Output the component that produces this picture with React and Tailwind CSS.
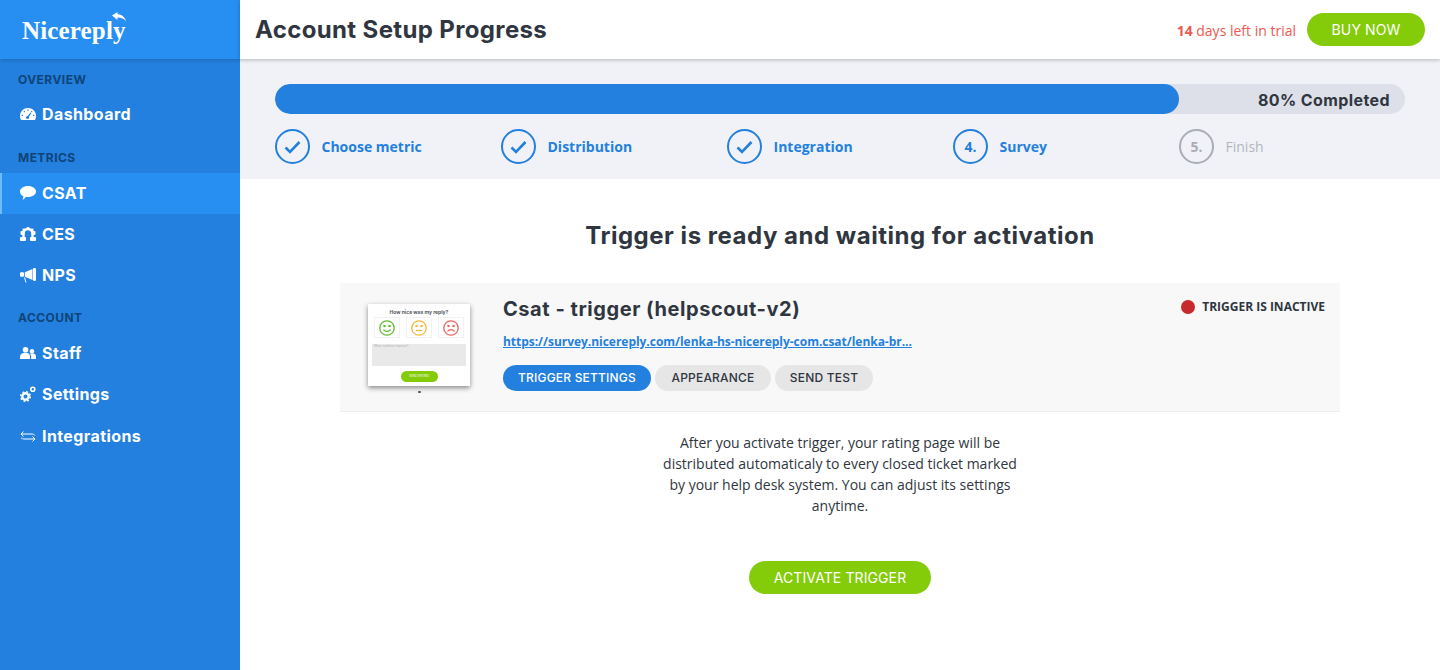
import React from "react";

const head = { fontFamily: '"Inter", "Liberation Sans", sans-serif' };
const body = { fontFamily: '"Open Sans", "Liberation Sans", sans-serif' };

function Gauge() {
  return (
    <svg width="16" height="12" viewBox="0 0 16 12">
      <path d="M8 0C3.600 0 0 3.500 0 8c0 1.400.3 2.800 1 4h14c.7-1.200 1-2.600 1-4 0-4.500-3.600-8-8-8z" fill="white" />
      <g fill="#2380de">
        <rect x="7.400" y="1.500" width="1.200" height="1.200" />
        <rect x="3.800" y="3" width="1.200" height="1.200" />
        <rect x="1.800" y="6.800" width="1.200" height="1.200" />
        <rect x="13" y="6.800" width="1.200" height="1.200" />
        <rect x="11.100" y="3" width="1.200" height="1.200" />
        <circle cx="7.500" cy="9.500" r="1.500" />
        <path d="M7 9 10.500 4.500l.8.5L8.300 10z" />
      </g>
    </svg>
  );
}
function Ces() {
  return (
    <svg width="16" height="14" viewBox="0 0 16 14" fill="white">
      <path d="M3.500 11V6.500a4.500 4.500 0 0 1 9 0V11" fill="none" stroke="white" strokeWidth="2.400" />
      <rect x="0.500" y="4" width="4" height="4" rx="1" />
      <rect x="11.500" y="4" width="4" height="4" rx="1" />
      <rect x="0" y="10" width="6" height="4" rx="1" />
      <rect x="10" y="10" width="6" height="4" rx="1" />
      <rect x="2.500" y="1.500" width="3" height="3" rx="1" />
      <rect x="10.500" y="1.500" width="3" height="3" rx="1" />
      <rect x="6.500" y="0" width="3" height="2.500" rx="1" />
    </svg>
  );
}
function Megaphone() {
  return (
    <svg width="16" height="15" viewBox="0 0 16 15" fill="white">
      <rect x="0" y="4.200" width="4" height="4.600" rx="1" />
      <path d="M4.800 4.200 12.500 1v11L4.800 8.800z" />
      <rect x="13" y="0" width="3" height="13" rx="1.200" />
      <path d="M4.500 9.500 6 14.500" fill="none" stroke="white" strokeWidth="1" />
    </svg>
  );
}
function Staff() {
  return (
    <svg width="16" height="12" viewBox="0 0 16 12" fill="white">
      <circle cx="5.500" cy="2.800" r="2.800" />
      <path d="M0 12V9.500C0 7.500 2 6.200 3.500 6h4C9 6.200 10 7.500 10 9.500V12z" />
      <circle cx="12" cy="4.200" r="2.200" />
      <path d="M11 12V9.500c0-1.200-.4-2-1-2.700.5-.3 1.200-.5 2-.5 2 0 4 1.200 4 3.200V12z" />
    </svg>
  );
}
function Cogs() {
  return (
    <svg width="16" height="16" viewBox="0 0 16 16" fill="none" stroke="white">
      <circle cx="5.500" cy="10.500" r="3.200" strokeWidth="2.400" />
      <circle cx="5.500" cy="10.500" r="4.800" strokeWidth="1.500" strokeDasharray="1.900 1.870" />
      <circle cx="12.800" cy="3.200" r="2" strokeWidth="1.600" />
    </svg>
  );
}
function Arrows() {
  return (
    <svg width="16" height="11" viewBox="0 0 16 11" fill="none" stroke="white" strokeWidth="1">
      <path d="M15 4.500C14 3.300 13 3 12 3H1M3.500.5 1 3l2.500 2.500" />
      <path d="M1 6.500C2 7.700 3 8 4 8h11M12.500 5.500 15 8l-2.500 2.500" />
    </svg>
  );
}

function SectionLabel({ children, className = "" }) {
  return (
    <div className={`pl-[18px] text-[12px] leading-[16px] font-bold tracking-[0.45px] text-[#0f4478] ${className}`} style={head}>
      {children}
    </div>
  );
}

function NavItem({ icon, label, active }) {
  return (
    <div
      className={`flex items-center h-[41px] gap-[6px] pb-[1px] text-white text-[16px] font-bold tracking-[0.4px] ${
        active ? "bg-[#288ff2] border-l-2 border-[#73bafc] pl-[18px]" : "pl-[20px]"
      }`}
      style={head}
    >
      <span className="w-[16px] flex items-center justify-center shrink-0">{icon}</span>
      <span>{label}</span>
    </div>
  );
}

function Check() {
  return (
    <svg width="17" height="14" viewBox="0 0 17 14" fill="none" stroke="#2380de" strokeWidth="2.600">
      <path d="M1.500 7.500 6 12 15.500 2" />
    </svg>
  );
}

function Step({ done, num, label, muted }) {
  return (
    <div className="w-[226px] flex items-center gap-[11.500px]" style={body}>
      <div
        className={`w-[35px] h-[35px] rounded-full border-2 flex items-center justify-center text-[14px] font-bold ${
          muted ? "border-[#a9adb4] text-[#a9adb4]" : "border-[#2380de] text-[#2380de]"
        }`}
      >
        {done ? <Check /> : num}
      </div>
      <span className={`text-[14px] ${muted ? "text-[#b3b6bc]" : "font-bold text-[#2380de]"}`}>{label}</span>
    </div>
  );
}

function Pill({ children, active, width }) {
  return (
    <div
      className={`h-[26px] rounded-full flex items-center justify-center text-[12px] font-medium tracking-[0.2px] ${width} ${
        active ? "bg-[#2380de] text-white" : "bg-[#e6e6e6] text-[#2f3640]"
      }`}
      style={head}
    >
      {children}
    </div>
  );
}

function Face({ color, mouth }) {
  return (
    <div className="w-[26px] h-[21px] border border-[#f2f2f2] flex items-center justify-center">
      <svg width="16" height="16" viewBox="0 0 16 16" fill="none" stroke={color} strokeWidth="1.300">
        <circle cx="8" cy="8" r="7.200" />
        <circle cx="5.500" cy="6" r=".6" fill={color} />
        <circle cx="10.500" cy="6" r=".6" fill={color} />
        <path d={mouth} />
      </svg>
    </div>
  );
}

function Thumb() {
  return (
    <div className="w-[102px] shrink-0 flex flex-col items-center">
      <div className="w-[102px] h-[82px] bg-white shadow-[0_2px_5px_rgba(0,0,0,0.45)] flex flex-col items-center pt-[5px]">
        <div className="text-[5px] leading-[7px] font-bold text-[#555b63]" style={head}>How nice was my reply?</div>
        <div className="flex gap-[6px] mt-[1px]">
          <Face color="#5dbb2c" mouth="M4.500 9.500c1.500 2.500 5.500 2.500 7 0" />
          <Face color="#f3b73c" mouth="M5 10.500h6" />
          <Face color="#e8645c" mouth="M4.500 11.500c1.500-2.500 5.500-2.500 7 0" />
        </div>
        <div className="w-[94px] h-[22px] bg-[#e9e9e9] mt-[6px] px-[2px] text-[3px] leading-[5px] text-[#aaaaaa]" style={body}>What could we improve?</div>
        <div className="mt-[5px] w-[37px] h-[11px] rounded-full bg-[#84cc0a] text-[3px] leading-[11px] text-center text-white" style={head}>SEND RATING</div>
      </div>
      <div className="w-[3px] h-[2px] mt-[5px] bg-[#555555] rounded-full" />
    </div>
  );
}

export default function App() {
  return (
    <div className="flex w-[1440px] h-[670px] overflow-hidden bg-white">
      <aside className="w-[240px] shrink-0 bg-[#2380de] flex flex-col">
        <div className="relative z-10 h-[59px] bg-[#288ff2] shadow-[0_1px_4px_rgba(0,0,0,0.2)] flex items-center pl-[22px]">
          <div className="relative text-white text-[25px] font-bold tracking-[0.15px] leading-none mt-[2px]" style={{ fontFamily: '"Liberation Serif", serif' }}>
            Nicereply
            <svg className="absolute right-0 top-[-6px]" width="14" height="10" viewBox="0 0 14 10" fill="white">
              <path d="M0 3.500 5.500 0v2.300c4 0 7.200 2.200 8.500 7.200C12 6.500 9.500 5.500 5.500 5.500V8z" />
            </svg>
          </div>
        </div>
        <SectionLabel className="mt-[13px]">OVERVIEW</SectionLabel>
        <div className="mt-[6px]"><NavItem icon={<Gauge />} label="Dashboard" /></div>
        <SectionLabel className="mt-[15px] mb-[7px]">METRICS</SectionLabel>
        <NavItem active icon={
          <svg width="16" height="14" viewBox="0 0 16 14" fill="white"><path d="M8 0c4.400 0 8 2.400 8 5.500S12.400 11 8 11c-.7 0-1.400-.1-2-.2-.8 1.100-2 2.400-3.500 3 .5-1 .9-2 .9-3.300C1.500 9.500 0 7.700 0 5.500 0 2.400 3.600 0 8 0z" /></svg>
        } label="CSAT" />
        <NavItem icon={<Ces />} label="CES" />
        <NavItem icon={<Megaphone />} label="NPS" />
        <SectionLabel className="mt-[14px] mb-[7px]">ACCOUNT</SectionLabel>
        <NavItem icon={<Staff />} label="Staff" />
        <NavItem icon={<Cogs />} label="Settings" />
        <div className="mt-[1px]"><NavItem icon={<Arrows />} label="Integrations" /></div>
      </aside>
      <main className="flex-1 flex flex-col min-w-0">
        <header className="relative z-10 h-[59px] bg-white shadow-[0_1px_4px_rgba(0,0,0,0.25)] flex items-center justify-between pl-[15px] pr-[15px]">
          <h1 className="text-[24px] font-bold tracking-[0.36px] text-[#2f3640]" style={head}>Account Setup Progress</h1>
          <div className="flex items-center gap-[11px]">
            <span className="text-[14px] mt-[2px] text-[#ea5a50]" style={body}><b>14</b> days left in trial</span>
            <div className="w-[118px] h-[33px] rounded-full bg-[#84cc0a] text-white text-[14px] font-normal tracking-[0.1px] flex items-center justify-center" style={head}>BUY NOW</div>
          </div>
        </header>
        <section className="h-[120px] bg-[#f1f2f8] px-[35px] pt-[25px]">
          <div className="h-[30px] rounded-full bg-[#dddfe9] relative overflow-hidden flex items-center justify-end pr-[15px]">
            <div className="absolute left-0 top-0 h-full w-[80%] rounded-full bg-[#2380de]" />
            <span className="text-[16px] font-bold tracking-[0.4px] mt-[1px] text-[#2f3640]" style={head}>80% Completed</span>
          </div>
          <div className="flex mt-[15px]">
            <Step done label="Choose metric" />
            <Step done label="Distribution" />
            <Step done label="Integration" />
            <Step num="4." label="Survey" />
            <Step num="5." label="Finish" muted />
          </div>
        </section>
        <section className="flex flex-col items-center">
          <h2 className="mt-[41px] text-[24px] leading-[32px] font-bold tracking-[0.52px] text-[#2f3640]" style={head}>Trigger is ready and waiting for activation</h2>
          <div className="mt-[31px] w-[1000px] h-[129px] bg-[#f8f8f8] border-b border-[#eeeeee] flex pl-[28px] pt-[21px] pr-[15px]">
            <Thumb />
            <div className="ml-[33px] flex-1 min-w-0">
              <div className="flex justify-between items-start">
                <div className="text-[20px] leading-[26px] mt-[-8px] font-bold tracking-[0.55px] text-[#2f3640]" style={head}>Csat - trigger (helpscout-v2)</div>
                <div className="flex items-center gap-[7px] text-[12px] font-bold text-[#2f3640] mt-[-6px]" style={body}>
                  <span className="w-[14px] h-[14px] rounded-full bg-[#c62a2a]" />
                  TRIGGER IS INACTIVE
                </div>
              </div>
              <a className="block mt-[11px] text-[12px] leading-[17px] font-bold tracking-[-0.03px] text-[#2380de] underline" style={body}>https://survey.nicereply.com/lenka-hs-nicereply-com.csat/lenka-br...</a>
              <div className="flex gap-[4px] mt-[15px]">
                <Pill active width="w-[148px]">TRIGGER SETTINGS</Pill>
                <Pill width="w-[116px]">APPEARANCE</Pill>
                <Pill width="w-[98px]">SEND TEST</Pill>
              </div>
            </div>
          </div>
          <p className="mt-[20px] w-[370px] text-center text-[14px] leading-[21px] text-[#2f3640]" style={body}>
            After you activate trigger, your rating page will be distributed automaticaly to every closed ticket marked by your help desk system. You can adjust its settings anytime.
          </p>
          <div className="mt-[45px] w-[182px] h-[33px] rounded-full bg-[#84cc0a] text-white text-[14px] font-normal tracking-[0.1px] flex items-center justify-center" style={head}>ACTIVATE TRIGGER</div>
        </section>
      </main>
    </div>
  );
}
